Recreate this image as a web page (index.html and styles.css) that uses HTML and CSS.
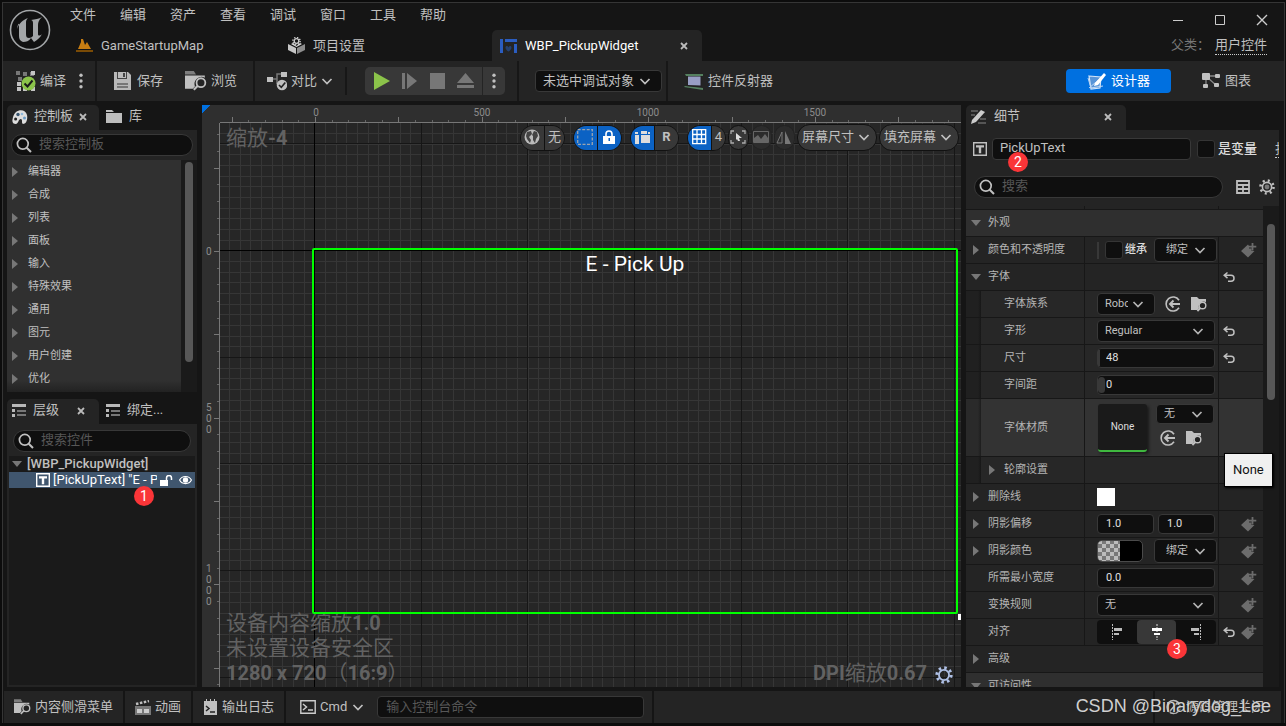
FILE: index.html
```html
<!DOCTYPE html>
<html lang="zh-CN">
<head>
<meta charset="utf-8">
<title>WBP_PickupWidget</title>
<link rel="stylesheet" href="styles.css">
</head>
<body>
<svg class="defs" aria-hidden="true">
  <symbol id="chev" viewBox="0 0 12 12"><path d="M1.500 4L6 8.500 10.500 4" fill="none" stroke="currentColor" stroke-width="1.7"/></symbol>
  <symbol id="x" viewBox="0 0 8 8"><path d="M1 1l6 6M7 1L1 7" stroke="currentColor" stroke-width="1.8"/></symbol>
  <symbol id="search" viewBox="0 0 16 16"><circle cx="6.8" cy="6.8" r="5.4" fill="none" stroke="currentColor" stroke-width="1.7"/><path d="M10.7 10.7L15 15" stroke="currentColor" stroke-width="2"/></symbol>
  <symbol id="right" viewBox="0 0 6 10"><path d="M0 0l6 5-6 5z" fill="#777"/></symbol>
  <symbol id="down" viewBox="0 0 10 6"><path d="M0 0h10L5 6z" fill="#777"/></symbol>
  <symbol id="dots" viewBox="0 0 4 16"><g fill="currentColor"><circle cx="2" cy="2.2" r="1.7"/><circle cx="2" cy="8" r="1.7"/><circle cx="2" cy="13.8" r="1.7"/></g></symbol>
  <symbol id="browse" viewBox="0 0 20 18"><path d="M0 0h8l2 3H0z" fill="#7d7d7d"/><path d="M0 4h18v2a6.500 6.500 0 0 0-9 8l-2 2H0z" fill="#c0c0c0"/><circle cx="14.5" cy="10.5" r="4" fill="none" stroke="#c0c0c0" stroke-width="1.6"/><path d="M11.6 13.4L8 17" stroke="#c0c0c0" stroke-width="2"/></symbol>
  <symbol id="find" viewBox="0 0 16 16"><path d="M0 1h6l2 2h7v3a5 5 0 0 0-7 6l-1.500 2H0z" fill="#c0c0c0"/><circle cx="11.5" cy="9.5" r="3.3" fill="#222" stroke="#c0c0c0" stroke-width="1.4"/><path d="M9.3 12L6.4 15" stroke="#c0c0c0" stroke-width="1.8"/></symbol>
  <symbol id="useback" viewBox="0 0 16 16"><path d="M14 4.2A7 7 0 1 0 14 11.8" fill="none" stroke="#c0c0c0" stroke-width="1.6"/><path d="M15 8H5M8.5 4.5L5 8l3.500 3.500" fill="none" stroke="#c0c0c0" stroke-width="1.9"/></symbol>
  <symbol id="reset" viewBox="0 0 12 12"><path d="M4.500 1.500L1.200 4.300l3.300 2.800M1.500 4.300h6.500a2.900 2.900 0 0 1 0 6H5" fill="none" stroke="#c0c0c0" stroke-width="1.500"/></symbol>
  <symbol id="key" viewBox="0 0 16 16"><path d="M0 9L7 2.500 8 4v2.500h2.500V9h3L7 15.500z" fill="#6c6c6c"/><path d="M11.500 1v7.500M7.800 4.700h7.500" stroke="#6c6c6c" stroke-width="1.800"/></symbol>
  <symbol id="listicon" viewBox="0 0 14 13"><path d="M0 0h14v3H0z" fill="#b8b8b8"/><path d="M0 5h3v3H0zM0 10h3v3H0z" fill="#b8b8b8"/><path d="M5 6h9v2H5zM5 10h9v2H5z" fill="#777"/></symbol>
  <symbol id="texticon" viewBox="0 0 14 14"><path d="M.7.7h12.600v12.600H.7z" fill="none" stroke="currentColor" stroke-width="1.400"/><path d="M3 3.300h8v2.200H8.200v5.800H5.800V5.500H3z" fill="currentColor"/></symbol>
  <symbol id="gear" viewBox="0 0 16 16"><circle cx="8" cy="8" r="6.300" fill="none" stroke="currentColor" stroke-width="2.800" stroke-dasharray="2.200 2.748"/><circle cx="8" cy="8" r="4.500" fill="none" stroke="currentColor" stroke-width="1.600"/></symbol>
  <symbol id="gearfull" viewBox="0 0 16 16"><circle cx="8" cy="8" r="6.500" fill="none" stroke="currentColor" stroke-width="2.600" stroke-dasharray="2 3.105"/><circle cx="8" cy="8" r="4.600" fill="none" stroke="currentColor" stroke-width="1.600"/><circle cx="8" cy="8" r="2.400" fill="#777"/></symbol>
</svg>

<div class="window">
  <header class="title">
    <svg class="logo" viewBox="0 0 42 42"><circle cx="21" cy="21" r="19.500" fill="#111" stroke="#a3a6a8" stroke-width="1.600"/><path d="M8 20c2-6 6-9 11-11-1 1-2 2-2 4v12c0 3 1 4 3 4 1.500 0 3-1 4-2V14c0-2-1-3-2-3 4-.5 8-1 11-3-3 3-4 5-4 8v9c0 2 2 2 4 0-2 4-5 6-8 8l-3-4c-2 3-5 4-8 4-3-1-4-3-4-6V16c0-2-1-2-2 4z" fill="#a3a6a8"/></svg>
    <div class="title-mid">
      <nav class="menu"><button>文件</button><button>编辑</button><button>资产</button><button>查看</button><button>调试</button><button>窗口</button><button>工具</button><button>帮助</button></nav>
      <div class="docs">
        <button class="doc"><svg width="17" height="13" viewBox="0 0 17 13"><path d="M0 11h17v2H0z" fill="#7a4b06"/><path d="M2 10L5 3l0-3 2 0 2 6 2-3 4 7z" fill="#c77d12"/></svg>GameStartupMap</button>
        <button class="doc"><svg width="17" height="17" viewBox="0 0 17 17"><path d="M0 7l8 4v6l-8-4z" fill="#c6c6c6"/><path d="M17 7l-8 4v6l8-4z" fill="#8d8d8d"/><path d="M3 7l2-1 3.500 3L12 6l2 1-5.500 3z" fill="#ddd"/><circle cx="8.500" cy="4" r="2.300" fill="none" stroke="#ccc" stroke-width="1.300"/><circle cx="8.500" cy="4" r="3.600" fill="none" stroke="#ccc" stroke-width="1.500" stroke-dasharray="1.300 1.527"/></svg>项目设置</button>
        <div class="doc active"><svg width="17" height="14" viewBox="0 0 17 14"><path d="M0 0h3v14H0zM5 0h12v3H5zM14 5h3v9h-3z" fill="#2b5dc0"/><path d="M5.500 8.500c0-2 2.500-2 3 0 .5-2 3-2 3 0C11.500 11 8.500 12.500 8.500 12.500S5.500 11 5.500 8.500z" fill="#25406f"/></svg><span>WBP_PickupWidget</span><button class="close" aria-label="关闭"><svg width="8" height="8"><use href="#x"/></svg></button></div>
      </div>
    </div>
    <div class="title-right">
      <div class="winctl"><button aria-label="最小化"><svg width="12" height="12"><path d="M1 6.500h10" stroke="#ccc"/></svg></button><button aria-label="最大化"><svg width="12" height="12"><path d="M1.500 1.500h9v9h-9z" fill="none" stroke="#ccc"/></svg></button><button aria-label="关闭窗口"><svg width="12" height="12"><path d="M1 1l10 10M11 1L1 11" stroke="#ccc" stroke-width="1.400"/></svg></button></div>
      <div class="parent"><span class="tc">父类：</span><a href="#parent">用户控件</a></div>
    </div>
  </header>

  <div class="toolbar">
    <div class="sec compile">
      <button class="tb"><svg width="22" height="22" viewBox="0 0 22 22"><g fill="#777"><path d="M1 1h4v4H1zM8 2h4v4H8zM3 7h4v4H3zM15 2h4v4h-4z"/></g><g fill="#c4c4c4"><path d="M16 1h4v4h-4zM2 12h4v4H2zM2 17h4v4H2zM8 17h4v4H8zM16 17h4v4h-4z"/></g><circle cx="13.500" cy="13.500" r="7" fill="#8bc34a"/><path d="M9.500 13.500l3 3 5-6" fill="none" stroke="#1a1a1a" stroke-width="2"/></svg>编译</button>
      <button class="more" aria-label="编译选项"><svg width="4" height="16"><use href="#dots"/></svg></button>
    </div>
    <div class="sec files">
      <button class="tb"><svg width="20" height="20" viewBox="0 0 20 20"><path d="M1 1h14l3 3v15H1z" fill="#b9b9b9"/><path d="M4 1h10v7H4z" fill="#444"/><path d="M5 1h8v6H5z" fill="#bbb"/><path d="M10 2h2v4h-2z" fill="#444"/><path d="M4 12h11v2H4zM4 15h11v2H4z" fill="#777"/></svg>保存</button>
      <button class="tb"><svg width="22" height="20"><use href="#browse"/></svg>浏览</button>
    </div>
    <div class="sec diff">
      <button class="tb"><svg width="20" height="20" viewBox="0 0 20 20"><path d="M5 8h5V3h5M10 8v5" fill="none" stroke="#777" stroke-width="1.500"/><path d="M0 6h6v5H0zM14 1h6v5h-6z" fill="#c0c0c0"/><circle cx="15" cy="14" r="5.300" fill="#c0c0c0"/><path d="M12 14l2.300 2.300 4-4.800" fill="none" stroke="#242424" stroke-width="1.600"/></svg>对比<svg class="chev" width="12" height="12"><use href="#chev"/></svg></button>
    </div>
    <div class="sec play">
      <div class="group">
        <button aria-label="播放"><svg width="17" height="18"><path d="M1 0l16 9-16 9z" fill="#8bc34a"/></svg></button>
        <button aria-label="步进"><svg width="17" height="18"><path d="M1 1h3v16H1zM6 1l10 8-10 8z" fill="#777"/></svg></button>
        <button aria-label="停止"><svg width="17" height="18"><path d="M1 1h15v16H1z" fill="#777"/></svg></button>
        <button aria-label="弹出"><svg width="17" height="18"><path d="M8.500 1L17 11H0zM0 13h17v3H0z" fill="#777"/></svg></button>
        <button class="last" aria-label="播放选项"><svg width="4" height="18"><use href="#dots"/></svg></button>
      </div>
    </div>
    <div class="sec debug"><label class="pick"><select aria-label="调试对象"><option>未选中调试对象</option></select><svg width="12" height="12"><use href="#chev"/></svg></label></div>
    <div class="sec plain"><button class="tb"><svg width="20" height="17" viewBox="0 0 20 17"><path d="M1 1h18v2H2zM1 13l18 2v2L0 14z" fill="#55805f"/><path d="M3 3h15v11L3 13z" fill="#222"/><path d="M4 3.500h12.500v9L4 12z" fill="#989ec4"/></svg>控件反射器</button></div>
    <div class="modes">
      <button class="tb designer"><svg width="20" height="19" viewBox="0 0 20 19"><path d="M2 4l12 1-1 11-9 1z" fill="#5794d8" stroke="#d5e6fa" stroke-width="1.200"/><path d="M1 6l3 10 12-2M2 16l13-11" stroke="#bcd6f5" fill="none"/><path d="M8 11l9-10 2 2-8 10-4 1z" fill="#fff"/></svg>设计器</button>
      <button class="tb"><svg width="19" height="18" viewBox="0 0 19 18"><path d="M4 4h12M4 4v10M6 6l9 8" stroke="#888" stroke-width="1.300"/><g fill="#c0c0c0"><rect y="1" width="8" height="7" rx="1"/><rect x="13" y="2" width="5" height="4" rx="1"/><rect x="1" y="12" width="5" height="4" rx="1"/><rect x="12" y="11" width="5" height="4" rx="1"/></g></svg>图表</button>
    </div>
  </div>

  <main class="main">
    <aside class="left">
      <section class="palette">
        <div class="tabs"><div class="tab on"><svg width="16" height="14" viewBox="0 0 16 14"><path d="M4 2c4-3 10-2 11 3s-1 9-4 9c-2-1 0-4-2-5-3 0-2 4-5 5-3 0-4-2-3.500-4.500C1 6 2 4 4 2z" fill="#ddd"/><circle cx="6" cy="4.500" r="1.700" fill="#37546e"/><circle cx="3.600" cy="9" r="1.500" fill="#222"/><circle cx="10" cy="4" r="1.300" fill="#8db7d9"/><circle cx="12.500" cy="8" r="1.500" fill="#6b9cc6"/></svg><span>控制板</span><button class="close" aria-label="关闭控制板"><svg width="8" height="8"><use href="#x"/></svg></button></div><button class="tab"><svg width="16" height="13" viewBox="0 0 16 13"><path d="M0 0h6l2 2H0zM0 3h16v10H0z" fill="#bdbdbd"/></svg><span>库</span></button></div>
        <div class="panelbody">
          <label class="search"><svg width="16" height="16"><use href="#search"/></svg><input type="search" placeholder="搜索控制板" aria-label="搜索控制板"></label>
          <div class="scroller"><ul class="cats">
            <li><svg width="6" height="10"><use href="#right"/></svg>编辑器</li><li><svg width="6" height="10"><use href="#right"/></svg>合成</li><li><svg width="6" height="10"><use href="#right"/></svg>列表</li><li><svg width="6" height="10"><use href="#right"/></svg>面板</li><li><svg width="6" height="10"><use href="#right"/></svg>输入</li><li><svg width="6" height="10"><use href="#right"/></svg>特殊效果</li><li><svg width="6" height="10"><use href="#right"/></svg>通用</li><li><svg width="6" height="10"><use href="#right"/></svg>图元</li><li><svg width="6" height="10"><use href="#right"/></svg>用户创建</li><li><svg width="6" height="10"><use href="#right"/></svg>优化</li>
          </ul><div class="bar"><i class="thumb tall"></i></div></div>
        </div>
      </section>
      <section class="hier">
        <div class="tabs"><div class="tab on"><svg width="14" height="13"><use href="#listicon"/></svg><span>层级</span><button class="close" aria-label="关闭层级"><svg width="8" height="8"><use href="#x"/></svg></button></div><button class="tab"><svg width="14" height="13"><use href="#listicon"/></svg><span>绑定...</span></button></div>
        <div class="panelbody grow">
          <label class="search inset"><svg width="16" height="16"><use href="#search"/></svg><input type="search" placeholder="搜索控件" aria-label="搜索控件"></label>
          <div class="tree">
            <div class="node root"><svg width="10" height="6"><use href="#down"/></svg>[WBP_PickupWidget]</div>
            <div class="node sel"><svg width="14" height="14"><use href="#texticon"/></svg><span>[PickUpText] "E - Pick Up"</span><svg width="13" height="11" viewBox="0 0 13 11"><path d="M0 5h8v6H0z" fill="#fff"/><path d="M6.500 5V3a2.500 2.500 0 0 1 5 0v2" fill="none" stroke="#fff" stroke-width="1.500"/></svg><svg width="13" height="10" viewBox="0 0 13 10"><path d="M.6 5C3 .3 10 .3 12.400 5 10 9.700 3 9.700.6 5z" fill="none" stroke="#fff" stroke-width="1.200"/><circle cx="6.500" cy="5" r="2.700" fill="#fff"/></svg><b class="badge b1">1</b></div>
          </div>
        </div>
      </section>
    </aside>

    <section class="stage">
      <div class="corner"></div>
      <div class="hruler"><span class="h0">0</span><span class="h1">500</span><span class="h2">1000</span><span class="h3">1500</span></div>
      <div class="vruler"><span class="v0">0</span><span class="v1">5<br>0<br>0</span><span class="v2">1<br>0<br>0<br>0</span></div>
      <div class="canvas">
        <div class="axis ax"></div><div class="axis ay"></div>
        <p class="ov top">缩放<b>-4</b></p>
        <p class="ov bottom">设备内容缩放<b>1.0</b><br>未设置设备安全区<br><b>1280 x 720</b><span class="tc">（</span><b>16:9</b><span class="tc">）</span></p>
        <p class="ov dpi"><b>DPI</b>缩放<b>0.67</b></p>
        <button class="dpigear" aria-label="DPI设置"><svg width="18" height="18"><use href="#gear"/></svg></button>
        <div class="frame">E - Pick Up</div><i class="grip"></i>
        <div class="ctools">
          <div class="seg m8"><button><svg width="16" height="16" viewBox="0 0 16 16"><circle cx="8" cy="8" r="7.500" fill="#bbb"/><path d="M3 3l4-1 1 3-3 3 2 3-1 3-3-4-1-3zM10 2l3 1 1 4-2 3-1 4-2-3V7L8 6z" fill="#444"/></svg></button><button>无</button></div>
          <div class="seg wide m8"><button class="blue"><svg width="16" height="16"><path d="M.7.7h14.600v14.600H.7z" fill="none" stroke="#9ba4ae" stroke-width="1.300" stroke-dasharray="3 1.500"/></svg></button><button class="blue"><svg width="12" height="14"><path d="M0 6h12v8H0z" fill="#fff"/><path d="M3 6V4a3 3 0 0 1 6 0v2" fill="none" stroke="#fff" stroke-width="1.600"/><path d="M5.500 8h1.500v3H5.500z" fill="#0b62c4"/></svg></button></div>
          <div class="seg wide m8"><button class="blue"><svg width="15" height="13"><path d="M0 1h3v2H0zM0 4h4v9H0zM6 0h6v3H6zM6 4h9v8H6zM13 1h2v2h-2z" fill="#ddd"/></svg></button><button><b>R</b></button></div>
          <div class="seg grid4"><button class="blue"><svg width="15" height="16"><path d="M.7.7h13v14H.7zM5 1v14M9.500 1v14M1 5.500h13M1 10h13" fill="none" stroke="#fff" stroke-width="1.300"/></svg></button><button>4</button></div>
          <button class="round"><svg width="16" height="14"><path d="M1 4V1h3M12 1h3v3M15 10v3h-3M4 13H1v-3" fill="none" stroke="#aaa" stroke-width="1.300"/><path d="M6 3l6 5H9l1 3-2 0-1-2-1 1z" fill="#ddd"/></svg></button>
          <button class="round off"><svg width="16" height="12"><path d="M.5.5h15v11H.5z" fill="none" stroke="#666"/><path d="M1 11V7l4-3 3 4 4-5 3 4v4z" fill="#666"/></svg></button>
          <button class="round off"><svg width="16" height="13"><path d="M6 1v11H1z" fill="none" stroke="#777"/><path d="M9 0l6 13H9z" fill="#777"/></svg></button>
          <button class="pill">屏幕尺寸<svg width="12" height="12"><use href="#chev"/></svg></button>
          <button class="pill">填充屏幕<svg width="12" height="12"><use href="#chev"/></svg></button>
        </div>
      </div>
    </section>

    <aside class="right">
      <div class="tabs"><div class="tab on wide"><svg width="16" height="16" viewBox="0 0 16 16"><path d="M0 2h7M0 6h4M9 10h6M7 14h8" stroke="#666" stroke-width="1.400"/><path d="M1 11l9-10 4 2-9 10-5 2z" fill="#ccc"/></svg><span>细节</span><button class="close" aria-label="关闭细节"><svg width="8" height="8"><use href="#x"/></svg></button></div></div>
      <div class="panelbody grow">
        <div class="namerow"><svg width="14" height="14"><use href="#texticon"/></svg><input class="field name" value="PickUpText" aria-label="名称"><label class="isvar"><input type="checkbox" class="chk">是变量</label><a href="#cls">打开</a><b class="badge b2">2</b></div>
        <div class="findrow"><label class="search"><svg width="16" height="16"><use href="#search"/></svg><input type="search" placeholder="搜索" aria-label="搜索"></label><button aria-label="表格"><svg width="14" height="14"><path d="M1 1h12v12H1zM1 5h12M1 9h12M7 5v8" fill="none" stroke="#bdbdbd" stroke-width="1.800"/></svg></button><button aria-label="设置"><svg width="16" height="16"><use href="#gearfull"/></svg></button></div>
        <div class="scroller grow">
          <div class="props">
            <div class="row cut"><span class="l"></span><span class="v"><input type="checkbox" class="chk" aria-label="覆盖"></span><span class="r"></span></div>
            <div class="row head"><span class="l"><svg width="10" height="6"><use href="#down"/></svg>外观</span></div>
            <div class="row"><span class="l"><svg width="6" height="10"><use href="#right"/></svg>颜色和不透明度</span><span class="v color"><i class="vbar"></i><label class="inh"><input type="checkbox" class="chk">继承</label><label class="pick bind"><select aria-label="绑定颜色"><option>绑定</option></select><svg width="12" height="12"><use href="#chev"/></svg></label></span><span class="r"><svg class="k" width="16" height="16"><use href="#key"/></svg></span></div>
            <div class="row"><span class="l"><svg width="10" height="6"><use href="#down"/></svg>字体</span><span class="v"></span><span class="r"><svg width="12" height="12"><use href="#reset"/></svg></span></div>
            <div class="row sub"><label class="l" for="fam">字体族系</label><span class="v"><span class="pick fam"><select id="fam"><option>Roboto</option></select><svg width="12" height="12"><use href="#chev"/></svg></span><svg width="16" height="16"><use href="#useback"/></svg><svg width="16" height="16"><use href="#find"/></svg></span><span class="r"></span></div>
            <div class="row sub"><label class="l" for="face">字形</label><span class="v"><span class="pick full"><select id="face"><option>Regular</option></select><svg width="12" height="12"><use href="#chev"/></svg></span></span><span class="r"><svg width="12" height="12"><use href="#reset"/></svg></span></div>
            <div class="row sub"><label class="l" for="size">尺寸</label><span class="v"><span class="spin"><i class="slim"></i><input id="size" class="field" value="48"></span></span><span class="r"><svg width="12" height="12"><use href="#reset"/></svg></span></div>
            <div class="row sub"><label class="l" for="sp">字间距</label><span class="v"><span class="spin"><i></i><input id="sp" class="field" value="0"></span></span><span class="r"></span></div>
            <div class="row sub mat"><label class="l" for="mat">字体材质</label><span class="v"><span class="asset">None</span><span class="assetctl"><span class="pick small"><select id="mat"><option>无</option></select><svg width="12" height="12"><use href="#chev"/></svg></span><span class="pair"><svg width="16" height="16"><use href="#useback"/></svg><svg width="16" height="16"><use href="#find"/></svg></span></span></span><span class="r"></span></div>
            <div class="row sub"><span class="l arrow"><svg width="6" height="10"><use href="#right"/></svg>轮廓设置</span><span class="v"></span><span class="r"></span></div>
            <div class="row"><span class="l"><svg width="6" height="10"><use href="#right"/></svg>删除线</span><span class="v"><i class="white"></i></span><span class="r"></span></div>
            <div class="row"><span class="l"><svg width="6" height="10"><use href="#right"/></svg>阴影偏移</span><span class="v two"><input class="field" value="1.0" aria-label="阴影偏移 X"><input class="field" value="1.0" aria-label="阴影偏移 Y"></span><span class="r"><svg class="k" width="16" height="16"><use href="#key"/></svg></span></div>
            <div class="row"><span class="l"><svg width="6" height="10"><use href="#right"/></svg>阴影颜色</span><span class="v color"><button class="swatch" aria-label="阴影颜色"><i></i></button><label class="pick bind"><select aria-label="绑定阴影颜色"><option>绑定</option></select><svg width="12" height="12"><use href="#chev"/></svg></label></span><span class="r"><svg class="k" width="16" height="16"><use href="#key"/></svg></span></div>
            <div class="row"><label class="l noarrow" for="minw">所需最小宽度</label><span class="v"><input id="minw" class="field" value="0.0"></span><span class="r"><svg class="k" width="16" height="16"><use href="#key"/></svg></span></div>
            <div class="row"><label class="l noarrow" for="tr">变换规则</label><span class="v"><span class="pick full"><select id="tr"><option>无</option></select><svg width="12" height="12"><use href="#chev"/></svg></span></span><span class="r"><svg class="k" width="16" height="16"><use href="#key"/></svg></span></div>
            <div class="row"><span class="l noarrow">对齐</span><span class="v"><span class="align"><button aria-label="左对齐"><svg width="12" height="16"><path d="M1.500 0v16" stroke="#bbb" stroke-dasharray="2 1"/><path d="M3 4h8v3H3zM3 9h5v2H3z" fill="#bbb"/></svg></button><button class="on" aria-label="居中"><svg width="12" height="16"><path d="M6 0v16" stroke="#ddd" stroke-dasharray="2 1"/><path d="M1 4h10v3H1zM3 9h6v2H3z" fill="#fff"/></svg></button><button aria-label="右对齐"><svg width="12" height="16"><path d="M10.500 0v16" stroke="#bbb" stroke-dasharray="2 1"/><path d="M1 4h8v3H1zM4 9h5v2H4z" fill="#bbb"/></svg></button><b class="badge b3">3</b></span></span><span class="r"><svg width="12" height="12"><use href="#reset"/></svg><svg class="k" width="16" height="16"><use href="#key"/></svg></span></div>
            <div class="row"><span class="l"><svg width="6" height="10"><use href="#right"/></svg>高级</span></div>
            <div class="row head"><span class="l"><svg width="10" height="6"><use href="#down"/></svg>可访问性</span></div>
          </div>
          <div class="bar"><i class="thumb details"></i></div>
        </div>
      </div>
      <div class="tip" role="tooltip">None</div>
    </aside>
  </main>

  <footer class="status">
    <button class="st"><svg width="17" height="16"><use href="#browse"/></svg>内容侧滑菜单</button>
    <button class="st"><svg width="16" height="15" viewBox="0 0 16 15"><path d="M1 4L14 1" stroke="#c0c0c0" stroke-width="2.500" stroke-dasharray="2.500 1.500"/><path d="M0 6h16v9H0z" fill="#777"/><path d="M2 9h5v4H2zM9 9h5v4H9z" fill="#ccc"/></svg>动画</button>
    <button class="st log"><svg width="13" height="16" viewBox="0 0 13 16"><path d="M0 2h2V0h1v2h3V0h1v2h3V0h1v2h2v14H0z" fill="#c0c0c0"/><path d="M2 7l3 2.500L2 12M6 13h5" fill="none" stroke="#222" stroke-width="1.500"/></svg>输出日志</button>
    <div class="st cmd"><button class="cmdbtn"><svg width="16" height="14" viewBox="0 0 16 14"><path d="M.8.8h14.400v12.400H.8z" fill="none" stroke="#ccc" stroke-width="1.400"/><path d="M3 4l3.500 3L3 10M8 10h5" fill="none" stroke="#ccc" stroke-width="1.500"/></svg>Cmd<svg class="chev" width="12" height="12"><use href="#chev"/></svg></button><input class="field" placeholder="输入控制台命令" aria-label="输入控制台命令"></div>
    <div class="st fill"></div>
    <button class="st src"><svg width="17" height="16" viewBox="0 0 17 16"><circle cx="8.500" cy="8" r="6.500" fill="none" stroke="#bbb" stroke-width="1.600"/><path d="M4 13l9-10" stroke="#bbb" stroke-width="1.600"/></svg>源码管理关闭</button>
  </footer>
</div>
<div class="mark">CSDN @Binarydog_Lee</div>
</body>
</html>
```
FILE: styles.css
```css
* { box-sizing: border-box; }
body {
  margin: 0;
  background: #0c0c0c;
  color: #c0c0c0;
  font: 13px/16px Roboto, "Noto Sans CJK SC", sans-serif;
  position: relative;
}
button, input, select { font: inherit; color: inherit; margin: 0; }
button { background: none; border: 0; padding: 0; display: flex; align-items: center; justify-content: center; white-space: nowrap; }
svg { display: block; flex: none; }
i { display: block; }
ul, p { margin: 0; padding: 0; list-style: none; }
a { color: inherit; }
.defs { position: absolute; width: 0; height: 0; }
.tc { font-family: Roboto, "Noto Sans CJK TC", sans-serif; }

.window {
  height: 100vh;
  padding: 0 1px 3px 2px;
  border-top: 2px solid #0c0c0c;
  display: flex;
  flex-direction: column;
  overflow: hidden;
}
.window > * { border: 0 solid #353535; border-left-width: 1px; border-right-width: 1px; background-color: #151515; }

/* Title area */
.title { display: flex; height: 59px; flex: none; border-top-width: 1px; }
.logo { width: 42px; height: 42px; margin: 6px 17px 0 6px; }
.title-mid { display: flex; flex-direction: column; flex: 1; }
.menu { display: flex; gap: 24px; height: 27px; padding: 0 0 4px 2px; align-items: center; }
.menu button { height: 20px; }
.docs { display: flex; gap: 2px; flex: 1; }
.doc { width: 210px; padding: 0 14px 0 8px; gap: 8px; display: flex; align-items: center; justify-content: flex-start; border-radius: 5px 5px 0 0; }
.doc.active { background: #242424; color: #fff; }
.close { margin-left: auto; color: #bbb; }
.title-right { padding: 11px 16px 0 0; display: flex; flex-direction: column; align-items: flex-end; gap: 11px; }
.winctl { display: flex; gap: 30px; }
.parent { color: #777; display: flex; gap: 5px; padding-right: 1px; }
.parent a { color: #c0c0c0; text-decoration: none; border-bottom: 1px dotted #ccc; height: 18px; }

/* Toolbar */
.toolbar { display: flex; height: 40px; flex: none; background-color: #242424; align-items: center; }
.sec { display: flex; align-items: center; height: 40px; border-right: 2px solid #171717; }
.tb { gap: 4px; }
.compile { padding: 0 12px; gap: 13px; }
.compile .tb { gap: 3px; }
.files { padding: 0 16px; gap: 22px; }
.diff { padding: 0 12px; height: 28px; }
.play { padding: 0 12px 0 18px; }
.group { display: flex; height: 28px; background: #383838; border-radius: 5px; padding-left: 8px; gap: 11px; }
.group .last { border-left: 1px solid #242424; width: 23px; margin-left: -3px; }
.debug { padding: 0 4px 0 16px; }
.plain { padding-left: 16px; border: 0; }
.modes { margin-left: auto; display: flex; gap: 31px; padding-right: 33px; }
.designer { background: #0070e0; color: #fff; width: 105px; height: 24px; border-radius: 4px; }

/* Fields */
.pick { position: relative; display: block; }
.pick select {
  appearance: none;
  width: 100%;
  height: 22px;
  padding: 0 20px 0 7px;
  border: 1px solid #383838;
  border-radius: 4px;
  background: #0f0f0f;
  color: #c0c0c0;
  display: block;
}
.pick svg { position: absolute; right: 11px; top: 50%; margin-top: -6px; pointer-events: none; }
.debug .pick { width: 127px; }
.field { background: #0f0f0f; border: 1px solid #383838; border-radius: 4px; height: 20px; padding: 0 8px 2px; width: 118px; min-width: 0; outline: 0; }
.field::placeholder, .search input::placeholder { color: #575757; opacity: 1; }
.chk { appearance: none; width: 18px; height: 18px; background: #0f0f0f; border: 1px solid #353535; border-radius: 3px; flex: none; }
.search { display: flex; align-items: center; gap: 7px; height: 22px; border: 1px solid #383838; border-radius: 11px; background: #0f0f0f; padding: 0 6px 0 4px; }
.search input { border: 0; background: none; min-width: 0; flex: 1; padding: 0 0 2px; outline: 0; }

/* Panels */
.main { flex: 1; min-height: 0; display: grid; grid-template-columns: 190px minmax(0, 1fr) 313px; gap: 5px; padding: 4px 5px 4px 4px; }
.left, .right, .hier, .palette { display: flex; flex-direction: column; min-height: 0; min-width: 0; }
.left { gap: 7px; }
.hier { flex: 1; }
.tabs { display: flex; height: 25px; flex: none; }
.tab { display: flex; align-items: center; justify-content: flex-start; width: 92px; padding: 0 14px 2px 5px; gap: 7px; white-space: nowrap; }
.tab span { padding-bottom: 2px; }
.tab.on { background: #242424; border-radius: 5px 5px 0 0; }
.tab.wide { width: 160px; }
.palette .on { gap: 6px; }
.tab:not(.on) { padding-left: 7px; }
.panelbody { background: #242424; display: flex; flex-direction: column; min-height: 0; }
.grow { flex: 1; min-height: 0; }
.panelbody > .search { margin: 4px; flex: none; }
.scroller { display: flex; overflow: hidden; }
.palette .scroller { height: 232px; }
.cats { background: linear-gradient(#303030 95%, #222); flex: 1; font-size: 11px; }
.cats li { height: 23px; display: flex; align-items: center; gap: 10px; padding-left: 5px; }
.bar { width: 16px; background: #1a1a1a; padding: 2px 4px; flex: none; }
.thumb { width: 8px; border-radius: 4px; background: #575757; }
.tall { height: 200px; }
.panelbody > .inset { margin: 6px 6px 4px; }
.tree { flex: 1; background: #1a1a1a; margin: 0 2px 2px; }
.node { display: flex; align-items: center; height: 16px; gap: 5px; padding-left: 3px; position: relative; }
.root { font-weight: 500; }
.sel { background: #40566e; color: #fff; padding: 0 3px 0 27px; gap: 3px; }
.sel span { overflow: hidden; white-space: nowrap; flex: 1; }
.sel svg:last-of-type { margin-left: 3px; }
.badge { position: absolute; width: 20px; height: 20px; border-radius: 10px; background: #fa3538; color: #fff; font: 14px/20px Roboto, sans-serif; text-align: center; z-index: 3; }
.b1 { left: 125px; top: 14px; }
.b2 { left: 42px; top: 22px; }
.b3 { left: 70px; top: 19px; }

/* Design surface */
.stage { display: grid; grid-template: 18px minmax(0, 1fr) / 18px minmax(0, 1fr); background: #2f2f2f; color: #8c8c8c; font-size: 10px; line-height: 11px; overflow: hidden; }
.corner { background: linear-gradient(135deg, #0070e0 6px, transparent 6px); }
.hruler, .vruler { position: relative; }
.hruler {
  border-bottom: 1px solid #777;
  background:
    linear-gradient(90deg, #777 0 1px, transparent 1px 83px, #777 83px 84px, transparent 84px 167px, #777 167px 168px, transparent 168px) 95px 100% / 250px 5px repeat-x,
    linear-gradient(90deg, #666 0 1px, transparent 1px 17px, #666 17px 18px, transparent 18px 33px, #666 33px 34px, transparent 34px) 95px 100% / 50px 2px repeat-x;
}
.vruler {
  border-right: 1px solid #777;
  background:
    linear-gradient(#777 0 1px, transparent 1px 83px, #777 83px 84px, transparent 84px 167px, #777 167px 168px, transparent 168px) 100% 128px / 5px 250px repeat-y,
    linear-gradient(#666 0 1px, transparent 1px 17px, #666 17px 18px, transparent 18px 33px, #666 33px 34px, transparent 34px) 100% 128px / 2px 50px repeat-y;
}
.hruler span { position: absolute; top: 2px; width: 30px; text-align: center; }
.h0 { left: 81px; } .h1 { left: 247px; } .h2 { left: 413px; } .h3 { left: 580px; }
.vruler span { position: absolute; left: 4px; }
.v0 { top: 123px; } .v1 { top: 279px; } .v2 { top: 440px; }
.canvas {
  position: relative;
  overflow: hidden;
  background:
    linear-gradient(90deg, #161616 0 1px, transparent 1px 107px, #161616 107px 108px, transparent 108px 213px, #161616 213px 214px, transparent 214px) 94px 0 / 320px 100%,
    linear-gradient(#161616 0 1px, transparent 1px 107px, #161616 107px 108px, transparent 108px 213px, #161616 213px 214px, transparent 214px) 0 127px / 100% 320px,
    linear-gradient(90deg, #363636 0 1px, transparent 1px 11px, #363636 11px 12px, transparent 12px 22px, #363636 22px 23px, transparent 23px) 94px 0 / 32px 100%,
    linear-gradient(#363636 0 1px, transparent 1px 11px, #363636 11px 12px, transparent 12px 22px, #363636 22px 23px, transparent 23px) 0 127px / 100% 32px,
    #262626;
}
.axis { position: absolute; background: #000; }
.ax { left: 0; right: 0; top: 127px; height: 1px; }
.ay { top: 0; bottom: 0; left: 94px; width: 1px; }
.frame { position: absolute; left: 92px; right: 3px; top: 125px; height: 366px; border: 2px solid #0f0; border-radius: 2px; color: #fff; font-size: 21px; line-height: 28px; text-align: center; }
.grip { position: absolute; right: 0; top: 491px; width: 3px; height: 6px; background: #fff; }
.ov { position: absolute; color: #626262; font-size: 21px; line-height: 25px; left: 6px; white-space: nowrap; }
.ov b { font-size: 20px; font-weight: 700; }
.ov.top { top: 3px; }
.bottom { bottom: 1px; }
.ov.dpi { left: auto; right: 34px; bottom: 1px; }
.dpigear { position: absolute; right: 8px; bottom: 3px; color: #aebfe4; }
.ctools { position: absolute; top: 1px; right: 2px; display: flex; gap: 2px; align-items: center; font-size: 13px; line-height: 16px; color: #c0c0c0; }
.ctools button { background: #383838; padding-bottom: 1px; }
.seg { display: flex; height: 26px; width: 45px; border: 1px solid #111; border-radius: 13px; overflow: hidden; }
.seg button { flex: 1; }
.seg button:first-child { flex: 0 0 24px; border-right: 1px solid #111; }
.seg.wide { width: 49px; }
.seg.grid4 { width: 39px; }
.m8 { margin-right: 6px; }
.ctools .blue { background: #0b62c4; }
.ctools .round { width: 21px; height: 25px; border-radius: 11px; border: 1px solid #111; }
.ctools .off { background: #2c2c2c; border-color: #222; }
.ctools .pill { height: 27px; border-radius: 13px; border: 1px solid #111; padding: 0 6px 1px 4px; gap: 4px; }

/* Details */
.right { position: relative; }
.namerow { height: 38px; display: flex; align-items: center; padding-left: 7px; gap: 5px; position: relative; }
.name { width: 199px; height: 22px; padding: 0 7px 3px; flex: none; }
.isvar { display: flex; align-items: center; gap: 3px; padding-left: 1px; font-weight: 500; color: #ddd; white-space: nowrap; flex: none; }
.namerow a { margin-left: 13px; width: 5px; overflow: hidden; white-space: nowrap; border-bottom: 1px dotted #ccc; text-decoration: none; }
.findrow { height: 38px; display: flex; align-items: center; padding: 0 4px 0 8px; gap: 9px; }
.findrow .search { flex: 1; margin-right: 4px; }
.props { flex: 1; min-width: 0; font-size: 11px; color: #b4b4b4; }
.row { display: grid; grid-template-columns: 118px 134px minmax(0, 1fr); height: 27px; border-bottom: 1px solid #171717; }
.row > * { display: flex; align-items: center; min-width: 0; }
.cut { height: 4px; overflow: hidden; align-items: end; }
.cut > * { height: 27px; margin-top: -23px; }
.cut .chk { margin-bottom: 2px; }
.head { background: #2f2f2f; }
.l { padding-left: 7px; gap: 9px; white-space: nowrap; }
.l svg[width="10"] { margin: 0 -2px; }
.noarrow { padding-left: 22px; }
.v { border-left: 1px solid #171717; padding-left: 12px; gap: 10px; }
.r { border-left: 1px solid #171717; padding: 0 6px 0 4px; gap: 6px; }
.k { margin-left: auto; }
.sub { background: linear-gradient(90deg, #202020 12px, #171717 15px, #272727 15px); }
.sub .l { padding-left: 38px; }
.sub .arrow { padding-left: 23px; }
.props .pick { width: 118px; }
.props .fam { width: 58px; }
.props .bind { width: 63px; margin: 0 1px 0 auto; }
.bind select { height: 24px; padding-left: 11px; }
.fam select { padding: 0 26px 0 7px; }
.props .color { gap: 3px; }
.vbar { width: 2px; height: 17px; background: #383838; margin-right: 3px; }
.inh { display: flex; align-items: center; gap: 2px; color: #ddd; font-weight: 500; }
.spin { position: relative; display: flex; }
.spin i { position: absolute; left: 1px; top: 2px; width: 7px; height: 16px; border-radius: 4px; background: #383838; }
.spin .slim { width: 2px; border-radius: 0; }
.props .field { color: #e0e0e0; }
.mat { height: 58px; background: linear-gradient(90deg, #2a2a2a 12px, #1d1d1d 15px, #333 15px); }
.mat .v { padding-left: 13px; gap: 9px; }
.asset { width: 49px; height: 48px; background: #1a1a1a; border-bottom: 2px solid #3fb83f; border-radius: 3px; display: flex; align-items: center; justify-content: center; font-size: 10px; color: #ddd; box-shadow: 2px 2px 3px #1a1a1a; }
.assetctl { display: flex; flex-direction: column; gap: 6px; padding-bottom: 5px; }
.props .small { width: 58px; }
.small select { height: 20px; }
.pair { display: flex; gap: 10px; padding-left: 4px; }
.white { width: 18px; height: 18px; background: #fff; }
.two { gap: 4px; }
.two .field { width: 57px; }
.swatch { width: 46px; height: 22px; border: 1px solid #4a4a4a; border-radius: 5px; background: #000; overflow: hidden; justify-content: flex-start; }
.swatch i { width: 22px; height: 22px; background: repeating-conic-gradient(#777 0 25%, #bbb 0 50%) 0 0 / 8px 8px; }
.align { position: relative; display: flex; width: 119px; height: 24px; background: #0f0f0f; border-radius: 4px; }
.align button { flex: 1; }
.align .on { background: #383838; border-radius: 4px; }
.details { height: 176px; margin-top: 16px; }
.tip { position: absolute; left: 258px; top: 348px; padding: 8px; background: #f0f0f0; color: #111; border: 1px solid #000; box-shadow: 1px 1px 2px #000; z-index: 4; }

/* Status bar */
.status { display: flex; gap: 2px; height: 32px; flex: none; padding: 0 3px 0 1px; }
.st { background: #242424; gap: 4px; padding: 0 10px; display: flex; align-items: center; justify-content: flex-start; white-space: nowrap; }
.st.log { padding-left: 11px; gap: 5px; }
.st.cmd { padding: 0 8px 0 14px; }
.cmdbtn { gap: 4px; }
.cmdbtn .chev { margin: 0 9px 0 1px; }
.cmd .field { width: 267px; height: 22px; }
.fill { flex: 1; }
.src { width: 126px; }
.mark { position: absolute; right: 15px; bottom: 9px; font: 18px/22px "Liberation Sans", sans-serif; color: #d0d0d0; text-shadow: 1px 1px 1px #222; white-space: nowrap; }
```
